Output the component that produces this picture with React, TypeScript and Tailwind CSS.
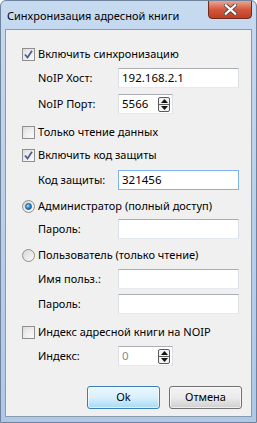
import React from 'react';

const font = { fontFamily: '"Noto Sans", "Open Sans", sans-serif' };

function Check({ checked }: { checked?: boolean }) {
    return (
        <div className="w-[13px] h-[13px] border border-[#8f8f8f] bg-gradient-to-br from-[#dcdcdc] to-[#fbfbfb] p-[2px] shrink-0">
            <div className="w-full h-full bg-gradient-to-br from-[#e6e6e6] to-[#f8f8f8] relative">
                {checked && (
                    <svg viewBox="0 0 9 9" className="absolute -left-[1px] -top-[1px] w-[9px] h-[9px]">
                        <path d="M1 4.5 L3.5 7.5 L8 0.8" fill="none" stroke="#4a5f97" strokeWidth="1.8" />
                    </svg>
                )}
            </div>
        </div>
    );
}

function Radio({ checked }: { checked?: boolean }) {
    return (
        <div className="w-[13px] h-[13px] rounded-full border border-[#8f8f8f] bg-gradient-to-br from-[#d6d6d6] to-[#fbfbfb] flex items-center justify-center shrink-0">
            {checked && <div className="w-[7px] h-[7px] rounded-full bg-[radial-gradient(circle_at_35%_35%,#8fe2ff,#1c6fb4_70%,#0e4b86)] border border-[#1a4f8a]" />}
        </div>
    );
}

function Input({ value, focused, w = 'w-[121px]' }: { value?: string; focused?: boolean; w?: string }) {
    return (
        <div className={`${w} h-[20px] bg-white border ${focused ? 'border-[#7eb4ea]' : 'border-[#abadb3] border-l-[#dbdfe6] border-r-[#dbdfe6] border-b-[#e3e9ef]'} flex items-center px-[3px] text-[11.5px] text-black`}>
            {value}
        </div>
    );
}

function Spin({ value, disabled }: { value: string; disabled?: boolean }) {
    return (
        <div className="w-[55px] h-[20px] bg-white border border-[#abadb3] border-l-[#dbdfe6] border-r-[#dbdfe6] border-b-[#e3e9ef] flex items-center pl-[3px] pr-[2px]">
            <span className={`flex-1 text-[11.5px] ${disabled ? 'text-[#8a8a8a]' : 'text-black'}`}>{value}</span>
            <div className="w-[12px] h-[15px] flex flex-col border border-[#5a5a5a] rounded-[2px] bg-[#f2f2f2]">
                <div className="flex-1 flex items-center justify-center border-b border-[#5a5a5a]">
                    <svg viewBox="0 0 7 4" className="w-[7px] h-[4px]"><path d="M0 4 L3.5 0 L7 4 Z" fill="#111" /></svg>
                </div>
                <div className="flex-1 flex items-center justify-center">
                    <svg viewBox="0 0 7 4" className="w-[7px] h-[4px]"><path d="M0 0 L3.5 4 L7 0 Z" fill="#111" /></svg>
                </div>
            </div>
        </div>
    );
}

function Field({ label, mt, children }: { label: string; mt: string; children: React.ReactNode }) {
    return (
        <div className={`${mt} h-[20px] flex items-center pl-[32px]`}>
            <span className="w-[80px] text-[11px] text-black">{label}</span>
            {children}
        </div>
    );
}

function Opt({ mt, children, label }: { mt: string; children: React.ReactNode; label: string }) {
    return (
        <div className={`${mt} h-[20px] flex items-center pl-[16px] gap-[3px]`}>
            {children}
            <span className="text-[11px] text-black">{label}</span>
        </div>
    );
}

export default function App() {
    return (
        <div style={font} className="w-[257px] h-[423px] bg-gradient-to-b from-[#c6daf0] via-[#b9d0ea] to-[#aec8e6] border border-[#6f839c] rounded-t-[6px] flex flex-col overflow-hidden">
            <div className="h-[28px] flex items-start relative">
                <span className="text-[11px] text-black pl-[6px] pt-[7px]">Синхронизация адресной книги</span>
                <div className="absolute right-[4px] top-[-1px] w-[44px] h-[19px] rounded-b-[4px] border border-[#6d2a1e] bg-gradient-to-b from-[#e9a593] via-[#d3573c] to-[#c03d22] flex items-center justify-center">
                    <svg viewBox="0 0 12 10" className="w-[13px] h-[11px]">
                        <path d="M1.5 1 L10.5 9 M10.5 1 L1.5 9" stroke="#3d3d3d" strokeWidth="3.6" strokeLinecap="round" />
                        <path d="M1.5 1 L10.5 9 M10.5 1 L1.5 9" stroke="#ffffff" strokeWidth="2" strokeLinecap="round" />
                    </svg>
                </div>
            </div>
            <div className="mx-[4px] h-[388px] bg-[#f0f0f0] border border-[#8a99ab] flex flex-col pt-[14px]">
                <Opt mt="mt-0" label="Включить синхронизацию"><Check checked /></Opt>
                <Field label="NoIP Хост:" mt="mt-[4px]"><Input value="192.168.2.1" /></Field>
                <Field label="NoIP Порт:" mt="mt-[6px]"><Spin value="5566" /></Field>
                <Opt mt="mt-[8px]" label="Только чтение данных"><Check /></Opt>
                <Opt mt="mt-[3px]" label="Включить код защиты"><Check checked /></Opt>
                <Field label="Код защиты:" mt="mt-[5px]"><Input value="321456" focused /></Field>
                <Opt mt="mt-[6px]" label="Администратор (полный доступ)"><Radio checked /></Opt>
                <Field label="Пароль:" mt="mt-[3px]"><Input /></Field>
                <Opt mt="mt-[6px]" label="Пользователь (только чтение)"><Radio /></Opt>
                <Field label="Имя польз.:" mt="mt-[4px]"><Input /></Field>
                <Field label="Пароль:" mt="mt-[5px]"><Input /></Field>
                <Opt mt="mt-[8px]" label="Индекс адресной книги на NOIP"><Check /></Opt>
                <Field label="Индекс:" mt="mt-[4px]"><Spin value="0" disabled /></Field>
                <div className="mt-[20px] flex justify-end gap-[9px] pr-[9px]">
                    <button className="w-[73px] h-[23px] rounded-[3px] border border-[#3c7fb1] bg-gradient-to-b from-[#eaf6fd] via-[#d9f0fc] to-[#a7d9f5] text-[11px] text-black shadow-[inset_0_0_0_1px_#ffffffa0]">Ok</button>
                    <button className="w-[73px] h-[23px] rounded-[3px] border border-[#707070] bg-gradient-to-b from-[#f2f2f2] via-[#ebebeb] to-[#cfcfcf] text-[11px] text-black shadow-[inset_0_0_0_1px_#ffffffa0]">Отмена</button>
                </div>
            </div>
        </div>
    );
}
